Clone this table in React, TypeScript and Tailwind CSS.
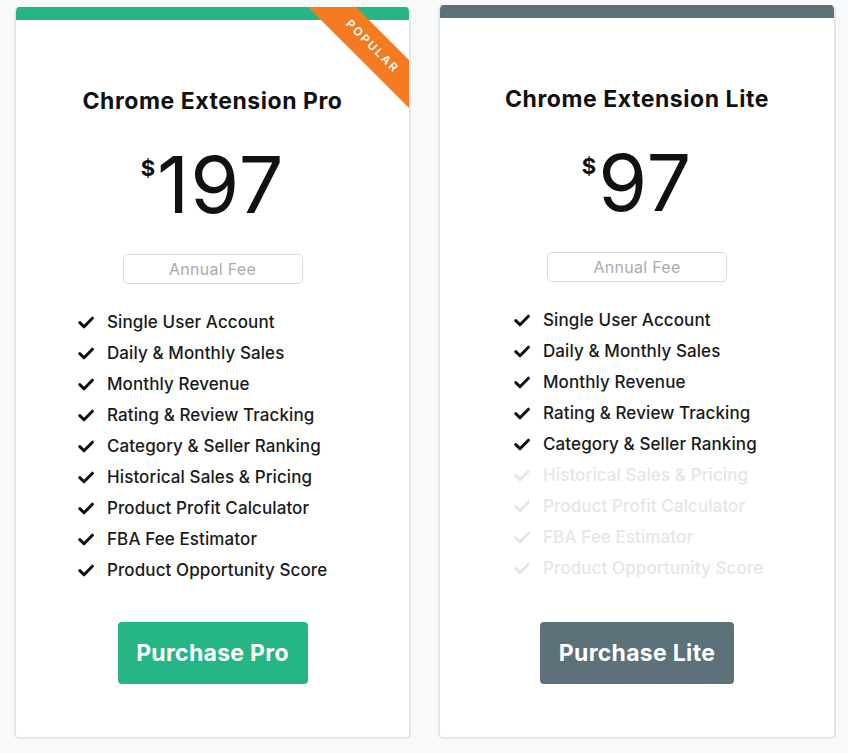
import React from "react";

const features = [
  "Single User Account",
  "Daily & Monthly Sales",
  "Monthly Revenue",
  "Rating & Review Tracking",
  "Category & Seller Ranking",
  "Historical Sales & Pricing",
  "Product Profit Calculator",
  "FBA Fee Estimator",
  "Product Opportunity Score",
];

function Check({ faded }: { faded?: boolean }) {
  return (
    <svg width="16" height="13" viewBox="0 0 16 13" className="shrink-0">
      <path
        d="M1.8 6.6 L6 10.8 L14.4 2.2"
        fill="none"
        stroke={faded ? "#e4e6e9" : "#111"}
        strokeWidth="3"
        strokeLinecap="round"
        strokeLinejoin="round"
      />
    </svg>
  );
}

type Plan = {
  title: string;
  price: string;
  included: number;
  bar: string;
  button: string;
  label: string;
  listPad: string;
  popular?: boolean;
  card: string;
};

function PlanCard({ plan }: { plan: Plan }) {
  return (
    <div
      className={`relative flex flex-col overflow-hidden rounded-[5px] border-x-2 border-b-2 border-[#e4e6ea] bg-white ${plan.card}`}
    >
      <div className={`h-[13px] w-full ${plan.bar}`} />

      {/* corner ribbon */}
      {plan.popular && (
        <div className="absolute left-[271px] top-[23px] flex h-[34px] w-[170px] rotate-45 items-center justify-center bg-[#f47b22]">
          <span className="text-[11.5px] font-semibold tracking-[2.2px] text-white">
            POPULAR
          </span>
        </div>
      )}

      <h2 className="mt-[67px] text-center text-[23px] font-bold leading-[28px] tracking-[0.55px] text-[#111]">
        {plan.title}
      </h2>

      <div className="mt-[30px] flex justify-center">
        <span className="mr-[2px] mt-[12px] text-[22px] font-bold leading-none text-[#111]">
          $
        </span>
        <span className="text-[79px] font-normal leading-none tracking-[1px] text-[#111]">
          {plan.price}
        </span>
      </div>

      <div className="mt-[30px] flex justify-center">
        <div className="flex h-[30px] w-[180px] items-center justify-center rounded-[5px] border border-[#d9dadd] text-[16px] tracking-[0.3px] text-[#a9abaf]">
          Annual Fee
        </div>
      </div>

      <ul className={`mt-[23px] flex flex-col ${plan.listPad}`}>
        {features.map((f, i) => {
          const faded = i >= plan.included;
          return (
            <li key={f} className="flex h-[31px] items-center gap-[13px]">
              <Check faded={faded} />
              <span
                className={`text-[17px] font-medium tracking-[0.1px] ${
                  faded ? "text-[#e4e6e9]" : "text-[#1a1a1a]"
                }`}
              >
                {f}
              </span>
            </li>
          );
        })}
      </ul>

      <div className="mt-auto mb-[53px] flex justify-center">
        <button
          className={`h-[62px] rounded-[4px] text-[23px] font-bold tracking-[0.3px] text-white ${plan.button}`}
        >
          {plan.label}
        </button>
      </div>
    </div>
  );
}

export default function App() {
  const plans: Plan[] = [
    {
      title: "Chrome Extension Pro",
      price: "197",
      included: 9,
      bar: "bg-[#26b585]",
      button: "bg-[#26b585] w-[190px]",
      label: "Purchase Pro",
      listPad: "pl-[62px]",
      popular: true,
      card: "mt-[2px] h-[732px] w-[397px]",
    },
    {
      title: "Chrome Extension Lite",
      price: "97",
      included: 5,
      bar: "bg-[#5c7179]",
      button: "bg-[#5c7179] w-[194px]",
      label: "Purchase Lite",
      listPad: "pl-[74px]",
      card: "h-[734px] w-[398px]",
    },
  ];

  return (
    <div
      className="flex h-[753px] w-full items-start gap-[27px] bg-[#f8f9fb] pl-[14px] pt-[5px]"
      style={{ fontFamily: "Inter, 'Liberation Sans', sans-serif" }}
    >
      {plans.map((p) => (
        <PlanCard key={p.title} plan={p} />
      ))}
    </div>
  );
}
